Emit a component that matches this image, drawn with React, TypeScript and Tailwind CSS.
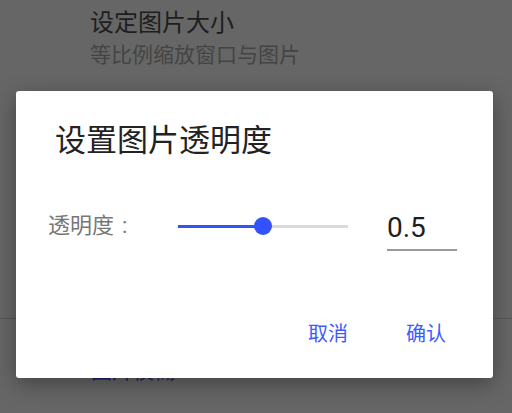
import React from "react";

const cjk = { fontFamily: 'Roboto, "Noto Sans CJK SC", "Noto Sans", sans-serif' };

export default function App() {
  return (
    <div className="relative w-[512px] h-[413px] overflow-hidden bg-[#666666]" style={cjk}>
      {/* background list */}
      <div className="flex flex-col pl-[90px] pt-[11px]">
        <div className="text-[24px] leading-[24px] text-[#1e1e1e]">设定图片大小</div>
        <div className="mt-[10px] text-[21px] leading-[21px] text-[#444444]">等比例缩放窗口与图片</div>
      </div>
      <div className="mt-[252px] h-px w-full bg-[#575757]" />
      <div className="pl-[91px] pt-[42px] text-[21px] leading-[21px] text-[#1a2266]">图片模糊</div>

      {/* dialog */}
      <div className="absolute left-[16px] top-[91px] w-[477px] h-[287px] rounded-[3px] bg-white shadow-[0_6px_22px_rgba(0,0,0,0.35)] flex flex-col">
        <div className="pl-[39px] pt-[34px] text-[31px] leading-[31px] text-[#222222]">设置图片透明度</div>
        <div className="mt-[48px] h-[44px] flex items-center">
          <div className="ml-[32px] w-[130px] flex items-center text-[22px] leading-[22px] text-[#777777]">
            <span>透明度</span>
            <span className="ml-[8px]">:</span>
          </div>
          <div className="relative w-[170px] h-[20px] flex items-center">
            <div className="h-[3px] w-[85px] bg-[#3352fb]" />
            <div className="h-[3px] flex-1 bg-[#dadada]" />
            <div className="absolute left-[76px] top-[1px] w-[18px] h-[18px] rounded-full bg-[#3352fb]" />
          </div>
          <div className="ml-[39px] w-[70px] pt-[12px]">
            <div className="pb-[7px] border-b-2 border-[#9a9a9a] text-[28px] leading-[28px] text-[#1e1e1e]">0.5</div>
          </div>
        </div>
        <div className="mt-[76px] flex justify-end gap-[58px] pr-[47px]">
          <div className="text-[20px] leading-[20px] text-[#3d5afe]">取消</div>
          <div className="text-[20px] leading-[20px] text-[#3d5afe]">确认</div>
        </div>
      </div>
    </div>
  );
}
